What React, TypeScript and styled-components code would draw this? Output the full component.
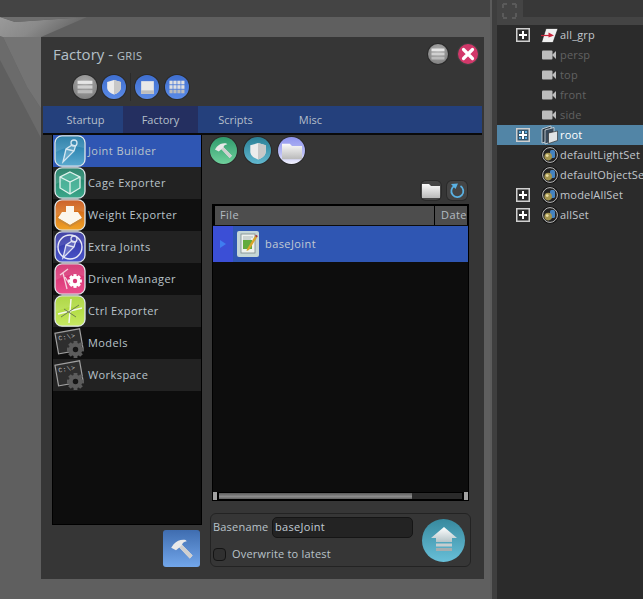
import React from 'react'
import styled, { createGlobalStyle } from 'styled-components'

const GlobalStyle = createGlobalStyle`
    html, body {
        margin: 0;
        padding: 0;
        background: #444;
    }
    * {
        box-sizing: border-box;
    }
`

const Page = styled.div`
    display: flex;
    width: 643px;
    height: 599px;
    overflow: hidden;
    background: #444;
    font-family: "Open Sans", "Liberation Sans", sans-serif;
    font-size: 11px;
    letter-spacing: 0.42px;
    color: #b9c3ca;
`

// Open Sans sits low in its line box, this pulls a label up by one pixel
const Label = styled.span`
    margin-top: -2px;
    white-space: nowrap;
`

/* ---------- viewport ---------- */

const ViewportColumn = styled.div`
    display: flex;
    flex-direction: column;
    width: 490px;
    flex: none;
`

const ViewportTop = styled.div`
    height: 17px;
    background: #444;
`

const Canvas = styled.div`
    position: relative;
    flex: 1;
    background: #5f5f5f;
`

const CanvasArt = styled.svg`
    position: absolute;
    left: 0;
    top: 0;
`

const Window = styled.div`
    position: absolute;
    left: 41px;
    top: 20px;
    width: 443px;
    height: 542px;
    display: flex;
    flex-direction: column;
    background: #363636;
`

const TitleRow = styled.div`
    display: flex;
    align-items: center;
    height: 38px;
    padding: 0 6px 5px 12px;
    gap: 10px;
`

const Title = styled.div`
    flex: 1;
    font-size: 15px;
    letter-spacing: 0;
    color: #b4c0c8;

    small {
        font-size: 11px;
        letter-spacing: 0.4px;
    }
`

const Toolbar = styled.div`
    display: flex;
    align-items: center;
    height: 24px;
    padding-left: 32px;
    gap: 5px;
`

const ToolbarSeparator = styled.div`
    width: 1px;
    height: 28px;
    margin: 0 -1px;
    background: #2b2b2b;
`

const Round = styled.div<{ $size: number; $bg: string; $ring?: string; $nudge?: number }>`
    display: flex;
    align-items: center;
    justify-content: center;
    flex: none;
    width: ${props => props.$size}px;
    height: ${props => props.$size}px;
    margin-left: ${props => props.$nudge || 0}px;
    border-radius: 50%;
    background: ${props => props.$bg};
    box-shadow: 0 0 0 1px ${props => props.$ring || '#2a2a2a'};
`

const TabBar = styled.div`
    display: flex;
    height: 27px;
    margin: 7px 2px 0;
    background: #24407c;
    letter-spacing: 0.02px;
`

const Tab = styled.div<{ $active?: boolean; $width: number; $inset?: number }>`
    display: flex;
    align-items: center;
    justify-content: center;
    width: ${props => props.$width}px;
    padding-left: ${props => props.$inset || 0}px;
    background: ${props => props.$active ? '#242f60' : 'transparent'};
    color: #b4bfca;
`

const TabRule = styled.div`
    height: 2px;
    margin: 0 2px;
    background: #0a0a0a;
`

const Body = styled.div`
    flex: 1;
    display: flex;
    padding-left: 11px;
`

const LeftColumn = styled.div`
    display: flex;
    flex-direction: column;
    align-items: flex-end;
    width: 150px;
    flex: none;
`

const ToolList = styled.div`
    width: 150px;
    height: 390px;
    background: #0d0d0d;
    border-left: 1px solid #000;
    border-right: 1px solid #000;
    border-bottom: 1px solid #000;
`

const ToolRow = styled.div<{ $active?: boolean; $alt?: boolean }>`
    display: flex;
    align-items: center;
    height: 32px;
    padding-left: 1px;
    gap: 2px;
    background: ${props => props.$active ? '#2f56b3' : props.$alt ? '#222' : '#101010'};
`

const HammerButton = styled.div`
    display: flex;
    align-items: center;
    justify-content: center;
    width: 37px;
    height: 37px;
    margin: 5px 2px 0 0;
    border-radius: 3px;
    background: linear-gradient(#3f6db0, #72a6ea);
`

const RightColumn = styled.div`
    display: flex;
    flex-direction: column;
    width: 262px;
    margin-left: 8px;
    padding-top: 2px;
`

const ModeRow = styled.div`
    display: flex;
    gap: 7px;
`

const FileActions = styled.div`
    display: flex;
    justify-content: flex-end;
    gap: 6px;
    height: 24px;
    margin-top: 16px;
    padding: 1px 5px 0 0;
`

const SmallButton = styled.div`
    display: flex;
    align-items: center;
    justify-content: center;
    width: 20px;
    height: 19px;
    border-radius: 5px;
    background: #444;
    box-shadow: 0 0 0 1px #2a2a2a;
`

const Table = styled.div`
    display: flex;
    flex-direction: column;
    height: 297px;
    width: 257px;
    margin-left: 2px;
    background: #0d0d0d;
    border: 1px solid #000;
    border-top-width: 2px;
    border-bottom-width: 1px;
`

const TableHead = styled.div`
    display: flex;
    height: 19px;
    gap: 1px;
    padding: 0 1px 0 2px;
    margin-bottom: 1px;
    background: #000;
`

const HeadCell = styled.div<{ $width?: number }>`
    ${props => props.$width ? `width: ${props.$width}px;` : 'flex: 1;'}
    display: flex;
    align-items: center;
    padding-left: ${props => props.$width ? 6 : 5}px;
    background: #4d4d4d;
    color: #b4bcc2;
`

const FileRow = styled.div`
    display: flex;
    align-items: center;
    height: 36px;
    gap: 4px;
    background: #2f56b3;
`

const Expander = styled.div`
    display: flex;
    align-items: center;
    justify-content: center;
    width: 20px;
    height: 100%;
    background: #3b4fd6;
`

const FileName = styled(Label)`
    margin-left: 2px;
    color: #c1cbd4;
`

const TableSpacer = styled.div`
    flex: 1;
`

const ScrollRow = styled.div`
    display: flex;
    align-items: center;
    height: 8px;
    gap: 2px;
    background: #000;
`

const ScrollCap = styled.div`
    width: 4px;
    height: 8px;
    background: #a2a2a2;
`

const ScrollTrack = styled.div`
    flex: 1;
    height: 6px;
    background: #2a2a2a;
`

const ScrollThumb = styled.div`
    width: 193px;
    height: 100%;
    background: linear-gradient(#5a5a5a, #8d8d8d 60%, #5f5f5f);
`

const SaveGroup = styled.div`
    display: flex;
    align-items: center;
    height: 54px;
    width: 261px;
    margin-top: 12px;
    padding: 0 5px 0 2px;
    border: 1px solid #232323;
    border-radius: 6px;
    letter-spacing: 0.2px;
`

const SaveFields = styled.div`
    display: flex;
    flex-direction: column;
    align-self: flex-start;
    gap: 10px;
    width: 207px;
    padding-top: 3px;
`

const NameRow = styled.div`
    display: flex;
    align-items: center;
    gap: 4px;
`

const NameLabel = styled(Label)`
    width: 55px;
`

const NameInput = styled.div`
    display: flex;
    align-items: center;
    width: 141px;
    height: 21px;
    padding-left: 2px;
    border: 1px solid #151515;
    border-radius: 5px;
    background: #232323;
    color: #c1cbd4;
    letter-spacing: 0.3px;
`

const CheckRow = styled.div`
    display: flex;
    align-items: center;
    gap: 6px;
`

const CheckBox = styled.div`
    width: 13px;
    height: 13px;
    border: 1px solid #141414;
    border-radius: 4px;
    background: #303030;
`

const SaveButton = styled.div`
    display: flex;
    align-items: center;
    justify-content: center;
    width: 43px;
    height: 43px;
    margin-left: 3px;
    border-radius: 50%;
    background: linear-gradient(#37899e, #68bfd8);
`

/* ---------- outliner ---------- */

const Divider = styled.div`
    width: 2px;
    flex: none;
    background: #5b5b5b;
`

const OutlinerPanel = styled.div`
    flex: 1;
    display: flex;
    flex-direction: column;
    padding-left: 5px;
    background: #3e3e3e;
    letter-spacing: 0.17px;
`

const OutlinerTop = styled.div`
    display: flex;
    height: 25px;
    flex: none;
    background: #444;
`

const ModeTile = styled.div`
    display: flex;
    justify-content: center;
    width: 26px;
    padding: 3px 1px 0 0;
`

const TopFill = styled.div`
    flex: 1;
    height: 17px;
    background: #383838;
`

const OutlinerList = styled.div`
    flex: 1;
    background: #2b2b2b;
`

const OutlineRow = styled.div<{ $selected?: boolean; $dim?: boolean }>`
    display: flex;
    align-items: center;
    height: 20px;
    white-space: nowrap;
    padding-left: 19px;
    background: ${props => props.$selected ? '#5285a6' : 'transparent'};
    color: ${props => props.$selected ? '#fff' : props.$dim ? '#626262' : '#c2c7cc'};
`

const ExpandSlot = styled.div`
    display: flex;
    width: 25px;
    flex: none;
`

const OutlineIcon = styled.div`
    display: flex;
    width: 19px;
    flex: none;
`

/* ---------- drawings ---------- */

const Lines = ({ size = 14 }: { size?: number }) => (
    <svg width={size} height={size} viewBox="0 0 14 14">
        <rect x="0.500" y="1.500" width="13" height="2.800" fill="#e6e6e6" />
        <rect x="0.500" y="5.600" width="13" height="2.800" fill="#d0d0d0" />
        <rect x="0.500" y="9.700" width="13" height="2.800" fill="#bbb" />
    </svg>
)

const Shield = ({ size = 14 }: { size?: number }) => (
    <svg width={size} height={size} viewBox="0 0 14 14">
        <path d="M7 .8 L13 2.600 V7.400 C13 10.600 10 12.600 7 13.600 C4 12.600 1 10.600 1 7.400 V2.600 Z" fill="#ececec" />
        <path d="M7 .8 L13 2.600 V7.400 C13 10.600 10 12.600 7 13.600 Z" fill="#c8c8c8" />
    </svg>
)

const SquareGlyph = () => (
    <svg width="15" height="15" viewBox="0 0 13 13">
        <rect x="1" y="1" width="11" height="11" fill="#e8e8e8" />
        <rect x="1" y="9" width="11" height="3" fill="#bdbdbd" />
    </svg>
)

const GridGlyph = () => (
    <svg width="16" height="14" viewBox="0 0 15 13">
        {[0, 1, 2].map(row => [0, 1, 2, 3].map(col => (
            <rect key={`${row}-${col}`} x={col * 3.7 + .4} y={row * 4.2 + .6} width="3" height="3.400" fill={row == 2 ? '#bbb' : '#e0e0e0'} />
        )))}
    </svg>
)

const Hammer = ({ size = 20 }: { size?: number }) => (
    <svg width={size} height={size} viewBox="0 0 20 20">
        <path d="M1 9 L3 6 C6 3 9 2 13 2.500 L14 3.500 C11.500 4 10.500 5 10 6.500 L18.800 15.500 L16.500 18 L7.800 8.700 L5 11 Z" fill="#e9e9e9" />
        <path d="M10 6.500 L18.800 15.500 L16.500 18 L7.800 8.700 Z" fill="#cfcfcf" />
    </svg>
)

const Folder = ({ width = 18, height = 15, id }: { width?: number; height?: number; id: string }) => (
    <svg width={width} height={height} viewBox="0 0 18 15">
        <defs>
            <linearGradient id={id} x1="0" y1="0" x2="0" y2="1">
                <stop offset="0" stopColor="#fafafa" />
                <stop offset="1" stopColor="#b9b9b9" />
            </linearGradient>
        </defs>
        <path d="M0 1 H7 L9 3 H18 V15 H0 Z" fill={`url(#${id})`} />
    </svg>
)

const Refresh = () => (
    <svg width="16" height="16" viewBox="0 0 16 16">
        <path d="M5.500 2.800 A6 6 0 1 0 11.500 3" fill="none" stroke="#5ab2e4" strokeWidth="1.800" />
        <path d="M2 1 L9 .5 L6.500 6 Z" fill="#5ab2e4" />
    </svg>
)

const UpHouse = () => (
    <svg width="28" height="28" viewBox="0 0 28 28">
        <defs>
            <linearGradient id="houseFill" x1="0" y1="0" x2="0" y2="1">
                <stop offset="0" stopColor="#fff" />
                <stop offset="1" stopColor="#b5c4c8" />
            </linearGradient>
        </defs>
        <path d="M14 1 L27 12 H22 V16 H6 V12 H1 Z" fill="url(#houseFill)" />
        <rect x="6" y="17.500" width="16" height="3" fill="#c6cdcf" />
        <rect x="6" y="22" width="16" height="3" fill="#a5adaf" />
    </svg>
)

const Arrow = () => (
    <svg width="6" height="8" viewBox="0 0 6 8">
        <path d="M0 0 L6 4 L0 8 Z" fill="#3f7df0" />
    </svg>
)

const Tile = ({ id, top, bottom, children }: { id: string; top: string; bottom: string; children: React.ReactNode }) => (
    <svg width="32" height="32" viewBox="0 0 32 32">
        <defs>
            <linearGradient id={id} x1="0" y1="0" x2="0" y2="1">
                <stop offset="0" stopColor={top} />
                <stop offset="1" stopColor={bottom} />
            </linearGradient>
        </defs>
        <rect x="1" y=".8" width="30" height="30.400" rx="7" fill={`url(#${id})`} stroke="#dfe6ea" strokeWidth="1.300" />
        <path d="M2 9 Q2 2 8 2 H24 Q30 2 30 9 V13 Q16 9 2 17 Z" fill="#fff" opacity=".12" />
        {children}
    </svg>
)

const JointGlyph = ({ color }: { color: string }) => (
    <g fill="none" stroke={color} strokeWidth="1.300">
        <circle cx="20" cy="8" r="3" />
        <path d="M18 10 L12 14 L9 27 L20 16 L21.500 11 Z" fill={color} fillOpacity=".25" />
        <path d="M12 14 L20 16" />
    </g>
)

const GearGlyph = ({ cx, cy, r, fill, hole }: { cx: number; cy: number; r: number; fill: string; hole: string }) => (
    <g>
        {[0, 45, 90, 135].map(angle => (
            <rect key={angle} x={cx - r * .28} y={cy - r * 1.25} width={r * .56} height={r * 2.5} fill={fill} transform={`rotate(${angle} ${cx} ${cy})`} />
        ))}
        <circle cx={cx} cy={cy} r={r} fill={fill} />
        <circle cx={cx} cy={cy} r={r * .4} fill={hole} />
    </g>
)

const ConsoleTile = () => (
    <svg width="32" height="32" viewBox="0 0 32 32">
        <g transform="rotate(-10 14 14)">
            <rect x="2.500" y="4" width="25" height="21" fill="#2e2e2e" stroke="#a0a0a0" strokeWidth="1.200" />
            <text x="5" y="12" fontSize="6.500" fontFamily="Liberation Mono, monospace" fill="#c4c4c4">C:\&gt;</text>
        </g>
        <GearGlyph cx={21.500} cy={22.500} r={6.800} fill="#5c5c5c" hole="#161616" />
    </svg>
)

const toolIcons: Record<string, React.ReactNode> = {
    joint: (
        <Tile id="tileJoint" top="#15719f" bottom="#5aa9cf">
            <JointGlyph color="#d4e7f1" />
        </Tile>
    ),
    cage: (
        <Tile id="tileCage" top="#13745a" bottom="#3ea88c">
            <path d="M16 5 L26 10 V21 L16 27 L6 21 V10 Z" fill="#69d0b8" fillOpacity=".55" stroke="#e0f2ec" strokeWidth="1.300" />
            <path d="M6 10 L16 15 L26 10 M16 15 V27" fill="none" stroke="#e0f2ec" strokeWidth="1.300" />
        </Tile>
    ),
    weight: (
        <Tile id="tileWeight" top="#c64d10" bottom="#f0a428">
            <path d="M12 7 H20 V13 H24 L28 19 L16 26 L4 19 L8 13 H12 Z" fill="#fbf6ec" />
            <path d="M4 19 L16 26 L28 19 V21 L16 28 L4 21 Z" fill="#c98a3a" />
        </Tile>
    ),
    extra: (
        <Tile id="tileExtra" top="#2b2b9a" bottom="#4b58cb">
            <circle cx="16" cy="16" r="12" fill="none" stroke="#e9ebf6" strokeWidth="1.400" />
            <JointGlyph color="#dfe2f4" />
        </Tile>
    ),
    driven: (
        <Tile id="tileDriven" top="#cf2568" bottom="#ea4f8c">
            <path d="M6 12 L14 6 M9 10 L13 26 M11 14 L16 22" fill="none" stroke="#f5cfdc" strokeWidth="1.300" />
            <GearGlyph cx={21} cy={18} r={5.500} fill="#fff" hole="#d83a78" />
        </Tile>
    ),
    ctrl: (
        <Tile id="tileCtrl" top="#a3d22c" bottom="#c7ea64">
            <path d="M4 19 L28 13 M17 4 L15 28" fill="none" stroke="#f4f7ee" strokeWidth="1.500" />
            <path d="M7 22 L25 10 M10 14 L22 22" fill="none" stroke="#6f7f50" strokeWidth="1" />
        </Tile>
    ),
    console: <ConsoleTile />
}

const FileIcon = () => (
    <svg width="22" height="26" viewBox="0 0 22 26">
        <rect x="0" y="0" width="22" height="26" rx="2" fill="#c5d6d6" />
        <rect x="4" y="3" width="14" height="19" fill="#eef2ee" stroke="#7c8a8a" strokeWidth=".8" />
        <rect x="6" y="9" width="9" height="9" fill="#63ab3d" />
        <path d="M6 6 H16 M6 8 H14" stroke="#9aa7a7" strokeWidth=".8" />
        <path d="M10 18 L18 5 L20 6.500 L12 19 L9.500 20 Z" fill="#d8a62c" />
        <path d="M18 5 L20 6.500 L20.800 5 L19 3.800 Z" fill="#a33" />
    </svg>
)

const PlusBox = ({ selected }: { selected?: boolean }) => (
    <svg width="14" height="14" viewBox="0 0 14 14">
        <rect x=".75" y=".75" width="12.500" height="12.500" fill={selected ? '#34566e' : '#2b2b2b'} stroke="#cfcfcf" strokeWidth="1.500" />
        {selected && <path d="M3 3 H5 V5 H3 Z M9 3 H11 V5 H9 Z M3 9 H5 V11 H3 Z M9 9 H11 V11 H9 Z" fill="#5aa9dc" />}
        <path d="M7 3 V11 M3 7 H11" stroke="#fff" strokeWidth="2" />
    </svg>
)

const CameraIcon = () => (
    <svg width="16" height="20" viewBox="0 0 16 20">
        <rect x="1" y="5.500" width="10.500" height="9" rx="1" fill="#bcbcbc" />
        <path d="M11 10 L15 6 V14 Z" fill="#bcbcbc" />
    </svg>
)

const GroupIcon = () => (
    <svg width="18" height="20" viewBox="0 0 18 20">
        <path d="M5 3.500 H17 L12 17.500 H0.500 Z" fill="#f0f0f0" stroke="#111" strokeWidth=".6" />
        <path d="M-1 10.500 H11" stroke="#c7243a" strokeWidth="1.200" />
        <path d="M7.500 7.500 L13 10.500 L7.500 12.500 Z" fill="#c7243a" />
    </svg>
)

const RootIcon = () => (
    <svg width="17" height="20" viewBox="0 0 17 20">
        <path d="M1 4 L10 1 V15 L1 18 Z" fill="#2b3a46" stroke="#d8dee2" strokeWidth=".8" />
        <path d="M4 5 L13 2.500 V16 L4 19 Z" fill="#38495a" stroke="#d8dee2" strokeWidth=".8" />
        <path d="M7.500 8 L16.500 6 V15.500 L7.500 18.500 Z" fill="#dfe3e5" stroke="#222" strokeWidth=".6" />
    </svg>
)

const SetIcon = () => (
    <svg width="18" height="18" viewBox="0 0 18 18">
        <circle cx="9" cy="9" r="8.800" fill="#111" />
        <circle cx="9" cy="9" r="7.400" fill="#222" stroke="#bdbdbd" strokeWidth="1" />
        <rect x="9" y="4" width="5" height="8" rx="1.500" fill="#4583bf" />
        <circle cx="7.200" cy="10.600" r="3.800" fill="#a1934f" />
        <circle cx="6.200" cy="9.600" r="1.400" fill="#e8dca4" />
    </svg>
)

const ModelingFrame = () => (
    <svg width="15" height="16" viewBox="0 0 15 16">
        <path d="M1 1 H14 M1 15 H14 M1 1 V15 M14 1 V15" fill="none" stroke="#5a5a5a" strokeWidth="2" strokeDasharray="4 5" />
    </svg>
)

/* ---------- data ---------- */

const tools = [
    { name: 'Joint Builder', icon: 'joint' },
    { name: 'Cage Exporter', icon: 'cage' },
    { name: 'Weight Exporter', icon: 'weight' },
    { name: 'Extra Joints', icon: 'extra' },
    { name: 'Driven Manager', icon: 'driven' },
    { name: 'Ctrl Exporter', icon: 'ctrl' },
    { name: 'Models', icon: 'console' },
    { name: 'Workspace', icon: 'console' }
]

const tabs = [
    { name: 'Startup', width: 80, inset: 5 },
    { name: 'Factory', width: 75 },
    { name: 'Scripts', width: 75 },
    { name: 'Misc', width: 75 }
]

type OutlineItem = {
    name: string;
    icon: 'group' | 'camera' | 'root' | 'set';
    expandable?: boolean;
    dim?: boolean;
    selected?: boolean;
}

const outline: OutlineItem[] = [
    { name: 'all_grp', icon: 'group', expandable: true },
    { name: 'persp', icon: 'camera', dim: true },
    { name: 'top', icon: 'camera', dim: true },
    { name: 'front', icon: 'camera', dim: true },
    { name: 'side', icon: 'camera', dim: true },
    { name: 'root', icon: 'root', expandable: true, selected: true },
    { name: 'defaultLightSet', icon: 'set' },
    { name: 'defaultObjectSet', icon: 'set' },
    { name: 'modelAllSet', icon: 'set', expandable: true },
    { name: 'allSet', icon: 'set', expandable: true }
]

const outlineIcons = {
    group: <GroupIcon />,
    camera: <CameraIcon />,
    root: <RootIcon />,
    set: <SetIcon />
}

const GREY = 'radial-gradient(circle at 50% 35%, #adadad, #767676)'
const BLUE = 'linear-gradient(#3f6fd0, #5a8ae6)'

export default function App() {
    return (
        <Page>
            <GlobalStyle />
            <ViewportColumn>
                <ViewportTop />
                <Canvas>
                    <CanvasArt width="490" height="582" viewBox="0 17 490 582">
                        <defs>
                            <linearGradient id="wedge" x1="0" y1="0" x2="1" y2="0.300">
                                <stop offset="0" stopColor="#9a9a9a" />
                                <stop offset="0.500" stopColor="#8a8a8a" />
                                <stop offset="1" stopColor="#636363" />
                            </linearGradient>
                        </defs>
                        <path d="M0 36 L3 37 L27 87 L42 110 L42 140 L0 60 Z" fill="#6b6b6b" />
                        <path d="M3 37 H42 V110 L27 87 Z" fill="#747474" />
                        <path d="M0 17 L15 22 L87 17 L41 37 H3 L0 36 Z" fill="url(#wedge)" />
                        <path d="M0 17 H87 L15 22 Z" fill="#6e6e6e" />
                    </CanvasArt>
                    <Window>
                        <TitleRow>
                            <Title>Factory - <small>GRIS</small></Title>
                            <Round $size={20} $bg={GREY}><Lines /></Round>
                            <Round $size={20} $bg="#d2386a" $ring="#404040">
                                <svg width="14" height="14" viewBox="0 0 14 14">
                                    <path d="M2.500 2.500 L11.500 11.500 M11.500 2.500 L2.500 11.500" stroke="#fff" strokeWidth="3.200" strokeLinecap="round" />
                                </svg>
                            </Round>
                        </TitleRow>
                        <Toolbar>
                            <Round $size={24} $bg={GREY}><Lines size={16} /></Round>
                            <Round $size={24} $bg={BLUE}><Shield size={16} /></Round>
                            <ToolbarSeparator />
                            <Round $size={24} $bg={BLUE}><SquareGlyph /></Round>
                            <Round $size={24} $bg={BLUE} $nudge={1}><GridGlyph /></Round>
                        </Toolbar>
                        <TabBar>
                            { tabs.map(tab => (
                                <Tab key={tab.name} $width={tab.width} $inset={tab.inset} $active={tab.name == 'Factory'}>{ tab.name }</Tab>
                            )) }
                        </TabBar>
                        <TabRule />
                        <Body>
                            <LeftColumn>
                                <ToolList>
                                    { tools.map((tool, index) => (
                                        <ToolRow key={tool.name} $active={index == 0} $alt={index % 2 == 1}>
                                            { toolIcons[tool.icon] }
                                            <Label>{ tool.name }</Label>
                                        </ToolRow>
                                    )) }
                                </ToolList>
                                <HammerButton><Hammer size={24} /></HammerButton>
                            </LeftColumn>
                            <RightColumn>
                                <ModeRow>
                                    <Round $size={27} $bg="linear-gradient(#2f9a6c, #6fd09c)"><Hammer size={19} /></Round>
                                    <Round $size={27} $bg="linear-gradient(#2a7f96, #62b8cf)"><Shield size={18} /></Round>
                                    <Round $size={27} $bg="linear-gradient(#8f95ee, #b9bcf5 60%, #f4f4ff)"><Folder id="modeFolder" width={20} height={18} /></Round>
                                </ModeRow>
                                <FileActions>
                                    <SmallButton><Folder id="openFolder" /></SmallButton>
                                    <SmallButton><Refresh /></SmallButton>
                                </FileActions>
                                <Table>
                                    <TableHead>
                                        <HeadCell><Label>File</Label></HeadCell>
                                        <HeadCell $width={32}><Label>Date</Label></HeadCell>
                                    </TableHead>
                                    <FileRow>
                                        <Expander><Arrow /></Expander>
                                        <FileIcon />
                                        <FileName>baseJoint</FileName>
                                    </FileRow>
                                    <TableSpacer />
                                    <ScrollRow>
                                        <ScrollCap />
                                        <ScrollTrack><ScrollThumb /></ScrollTrack>
                                        <ScrollCap />
                                    </ScrollRow>
                                </Table>
                                <SaveGroup>
                                    <SaveFields>
                                        <NameRow>
                                            <NameLabel>Basename</NameLabel>
                                            <NameInput><Label>baseJoint</Label></NameInput>
                                        </NameRow>
                                        <CheckRow>
                                            <CheckBox />
                                            <Label>Overwrite to latest</Label>
                                        </CheckRow>
                                    </SaveFields>
                                    <SaveButton><UpHouse /></SaveButton>
                                </SaveGroup>
                            </RightColumn>
                        </Body>
                    </Window>
                </Canvas>
            </ViewportColumn>
            <Divider />
            <OutlinerPanel>
                <OutlinerTop>
                    <ModeTile><ModelingFrame /></ModeTile>
                    <TopFill />
                </OutlinerTop>
                <OutlinerList>
                    { outline.map(item => (
                        <OutlineRow key={item.name} $selected={item.selected} $dim={item.dim}>
                            <ExpandSlot>{ item.expandable && <PlusBox selected={item.selected} /> }</ExpandSlot>
                            <OutlineIcon>{ outlineIcons[item.icon] }</OutlineIcon>
                            <Label>{ item.name }</Label>
                        </OutlineRow>
                    )) }
                </OutlinerList>
            </OutlinerPanel>
        </Page>
    )
}
